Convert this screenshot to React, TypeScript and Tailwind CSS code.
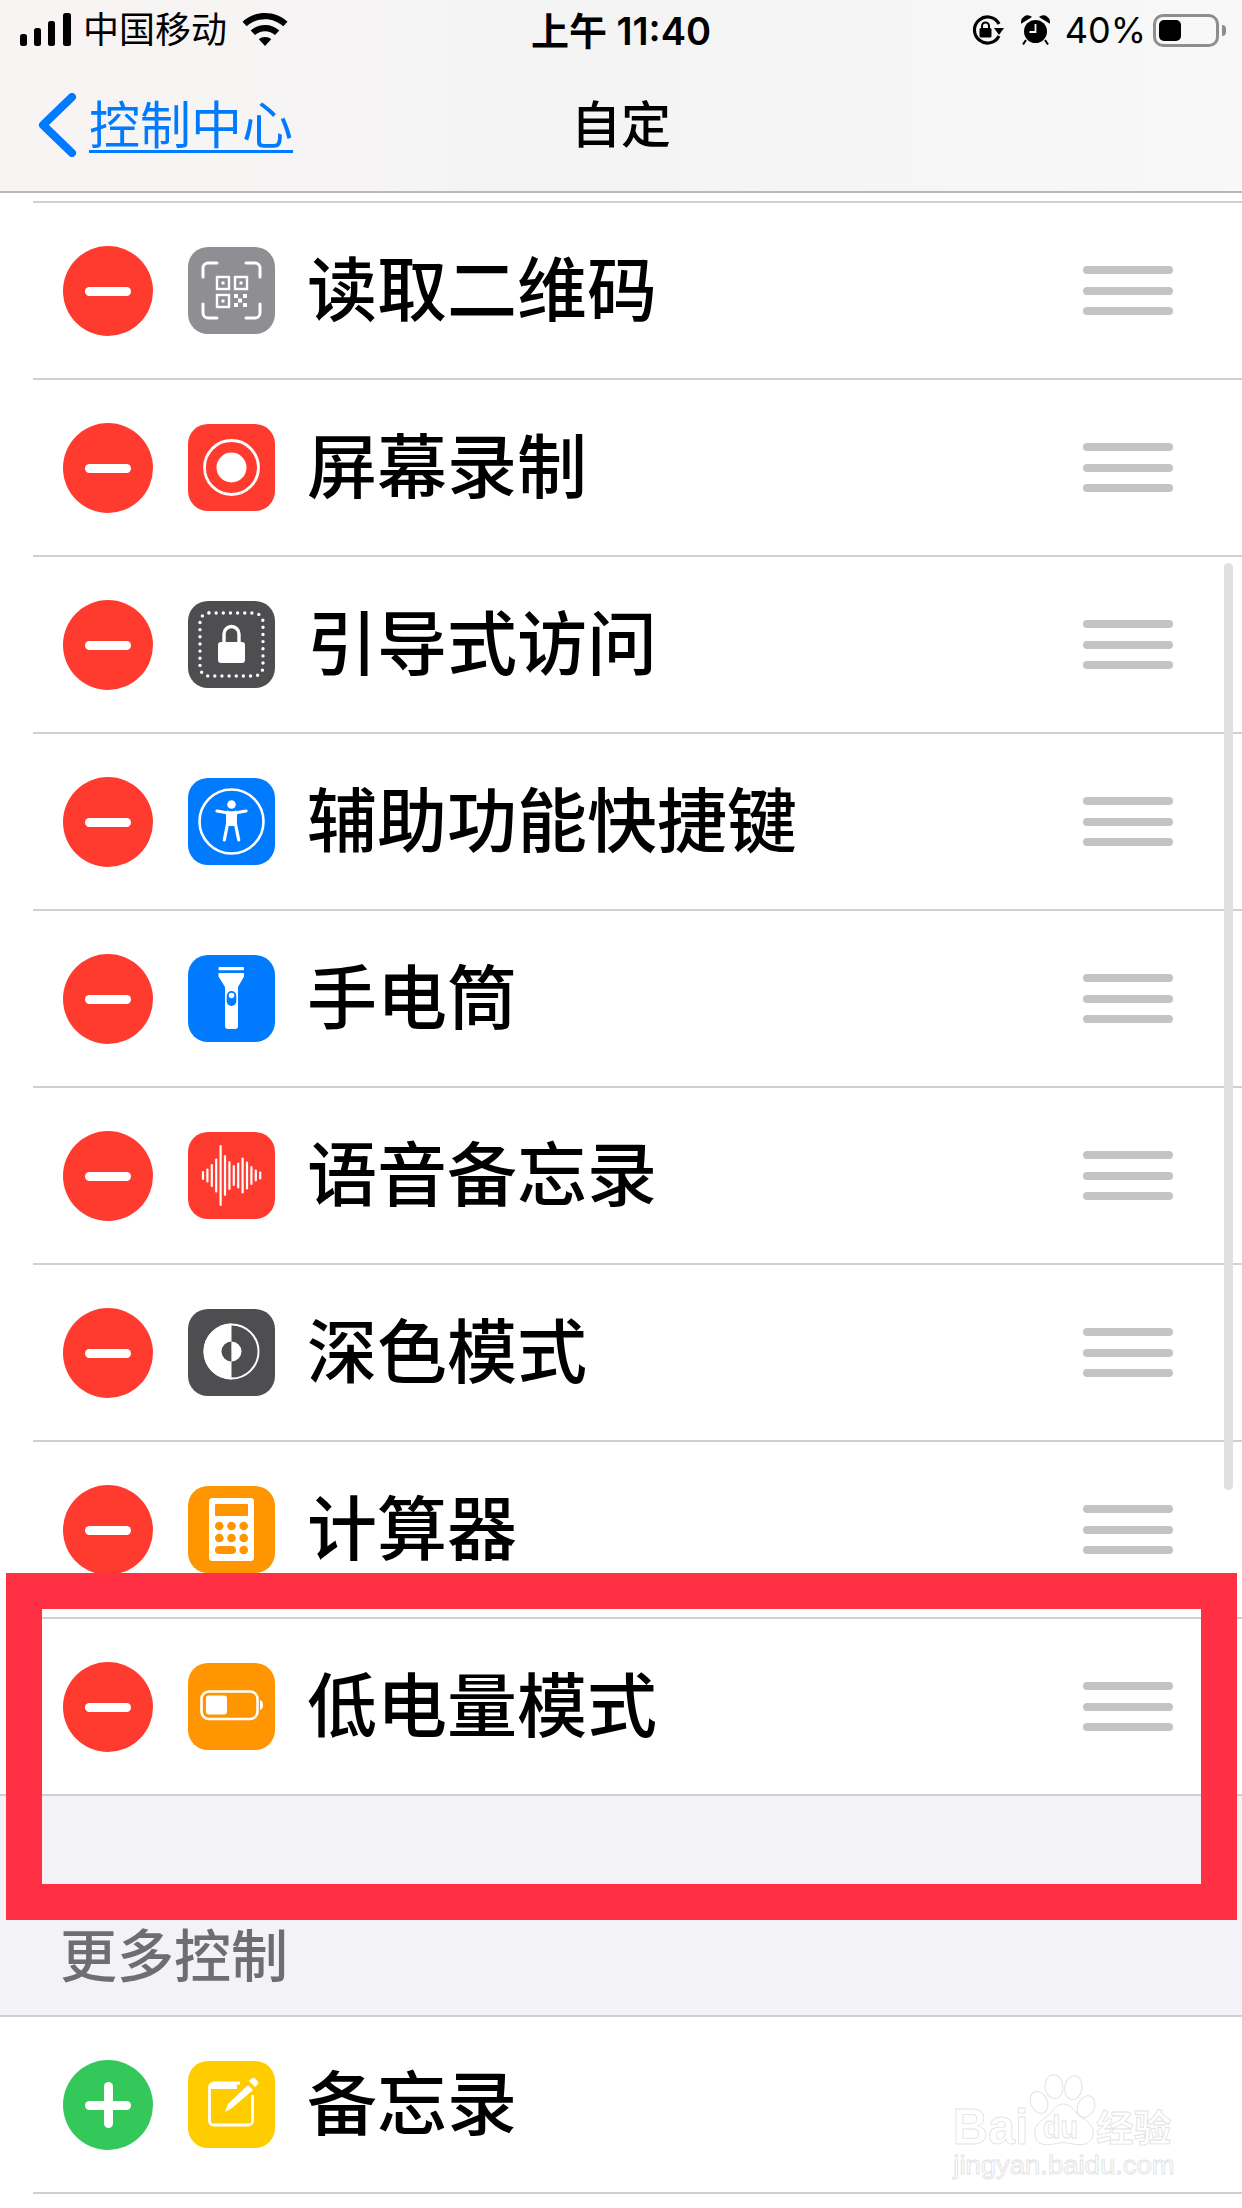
import type { ReactNode } from 'react';

const font = { cjk: 'font-["Inter","Noto_Sans_CJK_SC",sans-serif]' };

function Tile({ bg, children }: { bg: string; children: ReactNode }) {
    return (
        <div className={`w-[87px] h-[87px] rounded-[20px] shrink-0 ${bg}`}>
            <svg viewBox="0 0 87 87" width="87" height="87">
                {children}
            </svg>
        </div>
    );
}

function QrIcon() {
    return (
        <g fill="none" stroke="#fff" strokeWidth="3" strokeLinecap="round">
            <path d="M15 30v-9a5 5 0 0 1 5-5h9M58 16h9a5 5 0 0 1 5 5v9M15 57v9a5 5 0 0 0 5 5h9M58 71h9a5 5 0 0 0 5-5v-9" />
            <g strokeWidth="2.400" strokeLinecap="butt">
                <rect x="29" y="30" width="12" height="12" />
                <rect x="47" y="30" width="12" height="12" />
                <rect x="29" y="48" width="12" height="12" />
            </g>
            <g fill="#fff" stroke="none">
                <rect x="33.500" y="34.500" width="3" height="3" />
                <rect x="51.500" y="34.500" width="3" height="3" />
                <rect x="33.500" y="52.500" width="3" height="3" />
                <rect x="46" y="47" width="4" height="4" />
                <rect x="55" y="47" width="4" height="4" />
                <rect x="50" y="51.500" width="4" height="4" />
                <rect x="46" y="56" width="4" height="4" />
                <rect x="55" y="56" width="4" height="4" />
            </g>
        </g>
    );
}

function RecordIcon() {
    return (
        <g>
            <circle cx="43.500" cy="43.500" r="27" fill="none" stroke="#fff" strokeWidth="2.800" />
            <circle cx="43.500" cy="43.500" r="15" fill="#fff" />
        </g>
    );
}

function GuidedIcon() {
    return (
        <g>
            <rect x="12" y="12" width="63" height="63" rx="9" fill="none" stroke="#fff" strokeWidth="3.400" strokeLinecap="round" strokeDasharray="0 7.150" />
            <path d="M36 43V33a7.500 7.500 0 0 1 15 0v10" fill="none" stroke="#fff" strokeWidth="3.400" />
            <rect x="30" y="41" width="27" height="21" rx="3" fill="#fff" />
        </g>
    );
}

function AccessIcon() {
    return (
        <g>
            <circle cx="43.500" cy="43.500" r="32" fill="none" stroke="#fff" strokeWidth="2.600" />
            <circle cx="43.500" cy="26.500" r="4.300" fill="#fff" />
            <path d="M29 33l10 1.800h9L58 33" fill="none" stroke="#fff" strokeWidth="3.200" strokeLinecap="round" strokeLinejoin="round" />
            <path d="M39.500 34l.2 11-3.400 17M47.500 34l-.2 11 3.400 17" fill="none" stroke="#fff" strokeWidth="3.200" strokeLinecap="round" strokeLinejoin="round" />
            <path d="M39.500 35h8v13h-8z" fill="#fff" />
        </g>
    );
}

function TorchIcon() {
    return (
        <g>
            <rect x="30.500" y="12" width="25.500" height="3.200" rx="1" fill="#fff" />
            <path d="M30.500 18h25.500v3.500L50 32v39a3 3 0 0 1-3 3h-7a3 3 0 0 1-3-3V32l-6.500-10.500z" fill="#fff" />
            <rect x="38.700" y="36" width="9.600" height="15" rx="4.800" fill="#007aff" />
            <circle cx="43.500" cy="40.500" r="2.800" fill="#fff" />
        </g>
    );
}

const voiceBars = [7, 12, 21, 32, 59, 39, 27, 19, 24, 34, 26, 17, 10, 6];

function VoiceIcon() {
    return (
        <g stroke="#fff" strokeWidth="2.200" strokeLinecap="round">
            {voiceBars.map((h, i) => {
                const x = 15 + i * 4.4;
                return <line key={i} x1={x} x2={x} y1={43.5 - h / 2} y2={43.5 + h / 2} />;
            })}
        </g>
    );
}

function DarkIcon() {
    return (
        <g>
            <circle cx="43.500" cy="42.500" r="27" fill="none" stroke="#fff" strokeWidth="2" />
            <path d="M43.500 14.500a28 28 0 0 0 0 56z" fill="#fff" />
            <path d="M43.500 32.500a10 10 0 0 0 0 20z" fill="#4e4e50" />
            <path d="M43.500 32.500a10 10 0 0 1 0 20z" fill="#fff" />
        </g>
    );
}

function CalcIcon() {
    const xs = [31.3, 43.5, 55.7];
    return (
        <g>
            <rect x="21" y="12" width="45" height="63" rx="3.500" fill="#fff" />
            <rect x="27" y="18" width="33" height="12" rx="1" fill="#ff9500" />
            {xs.map((x) => (
                <circle key={`a${x}`} cx={x} cy="40" r="4.300" fill="#ff9500" />
            ))}
            {xs.map((x) => (
                <circle key={`b${x}`} cx={x} cy="52" r="4.300" fill="#ff9500" />
            ))}
            <rect x="27" y="60" width="21" height="8" rx="4" fill="#ff9500" />
            <circle cx="55.700" cy="64" r="4.300" fill="#ff9500" />
        </g>
    );
}

function BatteryIcon() {
    return (
        <g>
            <rect x="13.500" y="28.500" width="56" height="27.500" rx="7.500" fill="none" stroke="#fff" strokeWidth="2.600" />
            <rect x="18" y="32.500" width="21" height="19" rx="3" fill="#fff" />
            <path d="M72 37a4 5 0 0 1 3 5 4 5 0 0 1-3 5z" fill="#fff" />
        </g>
    );
}

function NotesIcon() {
    return (
        <g>
            <path d="M52 22H26a4.500 4.500 0 0 0-4.500 4.500V60a4 4 0 0 0 4 4h35a4 4 0 0 0 4-4V34" fill="none" stroke="#fff" strokeWidth="2.800" />
            <path d="M22 25h27" stroke="#fff" strokeWidth="6" />
            <path d="M60 24l5 5-21 18-7 4 3-8zM63.500 17.500a2.500 2.500 0 0 1 3.500 0l2.500 2.500a2.500 2.500 0 0 1 0 3.500l-2.500 2.500-6-6z" fill="#fff" />
        </g>
    );
}

function DragHandle() {
    return (
        <div className="flex flex-col gap-[12.500px] w-[90px] shrink-0">
            <div className="h-2 rounded-full bg-[#c4c4c6]" />
            <div className="h-2 rounded-full bg-[#c4c4c6]" />
            <div className="h-2 rounded-full bg-[#c4c4c6]" />
        </div>
    );
}

function Row({ label, tile, add = false, last = false }: { label: string; tile: ReactNode; add?: boolean; last?: boolean }) {
    return (
        <div className={`h-[177px] flex flex-col bg-white ${last ? '' : 'pl-[33px]'}`}>
            <div className={`flex-1 flex items-center pr-[69px] ${last ? 'pl-[63px]' : 'pl-[30px]'}`}>
                <div className={`relative w-[90px] h-[90px] rounded-full shrink-0 ${add ? 'bg-[#34c759]' : 'bg-[#ff3b30]'}`}>
                    <div className="absolute left-[22px] top-[41px] w-[46px] h-[9px] rounded-full bg-white" />
                    {add && <div className="absolute left-[41px] top-[22px] w-[9px] h-[46px] rounded-full bg-white" />}
                </div>
                <div className="ml-[35px]">{tile}</div>
                <div className="ml-[32px] flex-1 text-[70px] leading-none font-medium text-black">{label}</div>
                {!add && <DragHandle />}
            </div>
            <div className="h-[2px] bg-[#cfcfd1]" />
        </div>
    );
}

function StatusBar() {
    return (
        <div className="h-[60px] grid grid-cols-[1fr_auto_1fr] items-center text-black">
            <div className="flex items-center pl-5">
                <svg width="52" height="34" viewBox="0 0 52 34">
                    <rect x="0" y="21" width="7" height="12" rx="2.500" />
                    <rect x="14" y="15" width="7" height="18" rx="2.500" />
                    <rect x="28" y="8" width="7" height="25" rx="2.500" />
                    <rect x="43" y="0" width="8" height="33" rx="2.500" />
                </svg>
                <span className="ml-[11px] text-[36px] leading-none font-normal">中国移动</span>
                <svg className="ml-[15px]" width="46" height="34" viewBox="0 0 46 34">
                    <path d="M23 0c8.700 0 16.600 3.300 22.500 8.800l-4.200 4.500C36.500 8.900 30 6.200 23 6.200S9.500 8.900 4.700 13.300L.5 8.800C6.400 3.300 14.300 0 23 0z" />
                    <path d="M23 12c5.500 0 10.500 2 14.300 5.500l-4.300 4.600C30.300 19.600 26.800 18.200 23 18.200s-7.300 1.400-10 3.900l-4.300-4.600C12.500 14 17.500 12 23 12z" />
                    <path d="M23 24c2.400 0 4.500.9 6.200 2.300L23 33l-6.200-6.700C18.500 24.900 20.600 24 23 24z" />
                </svg>
            </div>
            <div className="text-[38px] leading-none font-semibold pt-[2px]">上午 11:40</div>
            <div className="flex items-center justify-end pr-[23px]">
                <svg width="34" height="30" viewBox="0 0 34 30">
                    <path d="M29 9A13 13 0 1 0 29 21" fill="none" stroke="#000" strokeWidth="3.200" />
                    <path d="M24 13h10l-5 7z" />
                    <rect x="9.500" y="13" width="12" height="9.500" rx="1.500" />
                    <path d="M12 14v-3a3.500 3.500 0 0 1 7 0v3" fill="none" stroke="#000" strokeWidth="2" />
                </svg>
                <svg className="ml-[17px]" width="29" height="31" viewBox="0 0 29 31">
                    <circle cx="14.500" cy="16.500" r="11.500" />
                    <path d="M1 7a5.500 5.500 0 0 1 8-5zM28 7a5.500 5.500 0 0 0-8-5zM5 25l-3 4.500M24 25l3 4.500" stroke="#000" strokeWidth="2" />
                    <path d="M14.500 9v8H8.500" fill="none" stroke="#f7f7f7" strokeWidth="1.800" />
                </svg>
                <span className="ml-[15px] text-[36px] leading-none font-normal">40%</span>
                <div className="ml-[7px] relative w-[66px] h-[33px] rounded-[10px] border-[3px] border-[#8e8e8e] p-[3px]">
                    <div className="w-[22px] h-[21px] rounded-[5px] bg-black" />
                    <div className="absolute -right-[10px] top-[8px] w-[4px] h-[11px] rounded-r-full bg-[#8e8e8e]" />
                </div>
            </div>
        </div>
    );
}

function NavBar() {
    return (
        <div className="h-[132px] grid grid-cols-[1fr_auto_1fr] items-center">
            <div className="flex items-center pl-[37px] pb-[2px]">
                <svg width="40" height="64" viewBox="0 0 40 64">
                    <path d="M35 4L6 32l29 28" fill="none" stroke="#007aff" strokeWidth="8" strokeLinecap="round" strokeLinejoin="round" />
                </svg>
                <span className="ml-[12px] text-[51px] leading-none text-[#007aff] underline decoration-[3px] underline-offset-[6px]">控制中心</span>
            </div>
            <div className="text-[50px] leading-none font-medium text-black pb-[2px]">自定</div>
            <div />
        </div>
    );
}

function Watermark() {
    return (
        <svg className="absolute left-[930px] top-[2040px]" width="270" height="160" viewBox="0 0 810 480">
            <g fill="none" stroke="#e2e2e2" strokeWidth="3">
                <ellipse cx="327" cy="187" rx="25" ry="34" transform="rotate(-25 327 187)" />
                <ellipse cx="372" cy="140" rx="27" ry="36" transform="rotate(-5 372 140)" />
                <ellipse cx="430" cy="143" rx="26" ry="36" transform="rotate(8 430 143)" />
                <ellipse cx="468" cy="200" rx="25" ry="34" transform="rotate(25 468 200)" />
                <path d="M400 192c25 0 30 22 52 38 20 14 38 26 38 48 0 26-22 38-46 36-16-1-30-6-44-6s-28 5-44 6c-24 2-42-10-42-36 0-22 16-34 36-48 22-16 25-38 50-38z" />
                <g fontFamily="Liberation Sans, sans-serif" fontWeight="700" strokeWidth="2.500">
                    <text x="68" y="312" fontSize="150" textLength="228" lengthAdjust="spacingAndGlyphs">Bai</text>
                    <text x="338" y="294" fontSize="92" textLength="106" lengthAdjust="spacingAndGlyphs">du</text>
                    <text x="498" y="306" fontSize="112" fontFamily="Noto Sans CJK SC, sans-serif" textLength="226" lengthAdjust="spacingAndGlyphs">经验</text>
                    <text x="70" y="402" fontSize="76" fontWeight="400" textLength="664" lengthAdjust="spacingAndGlyphs">jingyan.baidu.com</text>
                </g>
            </g>
        </svg>
    );
}

export default function App() {
    return (
        <div className={`relative w-[1242px] h-[2208px] overflow-hidden bg-white ${font.cjk}`}>
            <div className="bg-gradient-to-r from-[#f9f4f4] via-[#f4f4f4] to-[#f8f8f8] border-b-2 border-[#b8b8ba] h-[193px]">
                <StatusBar />
                <NavBar />
            </div>
            <div className="h-[8px]" />
            <div className="ml-[33px] h-[2px] bg-[#cfcfd1]" />
            <Row label="读取二维码" tile={<Tile bg="bg-[#8e8e93]"><QrIcon /></Tile>} />
            <Row label="屏幕录制" tile={<Tile bg="bg-[#ff3b30]"><RecordIcon /></Tile>} />
            <Row label="引导式访问" tile={<Tile bg="bg-[#4e4e50]"><GuidedIcon /></Tile>} />
            <Row label="辅助功能快捷键" tile={<Tile bg="bg-[#007aff]"><AccessIcon /></Tile>} />
            <Row label="手电筒" tile={<Tile bg="bg-[#007aff]"><TorchIcon /></Tile>} />
            <Row label="语音备忘录" tile={<Tile bg="bg-[#ff3b30]"><VoiceIcon /></Tile>} />
            <Row label="深色模式" tile={<Tile bg="bg-[#4e4e50]"><DarkIcon /></Tile>} />
            <Row label="计算器" tile={<Tile bg="bg-[#ff9500]"><CalcIcon /></Tile>} />
            <Row label="低电量模式" tile={<Tile bg="bg-[#ff9500]"><BatteryIcon /></Tile>} last />
            <div className="h-[221px] bg-[#f2f2f7] border-b-2 border-[#cfcfd1] flex items-end pl-[60px] pb-[30px]">
                <span className="text-[57px] leading-none font-medium text-[#6d6d72]">更多控制</span>
            </div>
            <Row label="备忘录" tile={<Tile bg="bg-[#ffcc00]"><NotesIcon /></Tile>} add />

            <div className="absolute left-[1224px] top-[563px] w-[9px] h-[927px] rounded-full bg-[#e0e0e0]" />
            <div className="absolute left-[6px] top-[1573px] w-[1231px] h-[347px] border-[36px] border-[#ff3044]" />
            <Watermark />
        </div>
    );
}
